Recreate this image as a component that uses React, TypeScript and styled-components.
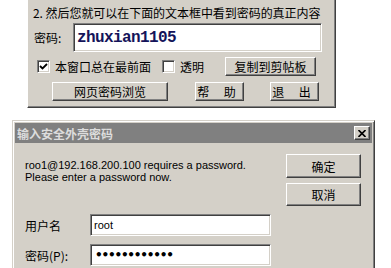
import React from "react";
import styled, { createGlobalStyle } from "styled-components";

const Global = createGlobalStyle`
  html, body { margin: 0; padding: 0; background: #ffffff; }
  body { font-family: "Noto Sans CJK SC", "DejaVu Sans", sans-serif; font-size: 12px; color: #000; }
  * { box-sizing: border-box; }
`;

const Page = styled.div`
  width: 391px;
  height: 268px;
  overflow: hidden;
  display: flex;
  flex-direction: column;
  background: #fff;
`;

const TopWindow = styled.div`
  margin-left: 27px;
  width: 309px;
  height: 108px;
  background: #d4d0c8;
  border-left: 1px solid #ffffff;
  border-right: 1px solid #404040;
  border-bottom: 1px solid #404040;
  box-shadow: inset -1px -1px 0 #808080, inset 1px 0 0 #d4d0c8;
  padding: 5px 13px 0 5px;
  display: flex;
  flex-direction: column;
`;

const Hint = styled.div`
  font-size: 12px;
  line-height: 16px;
  height: 16px;
  white-space: nowrap;
  letter-spacing: -0.05px;
`;

const PwdRow = styled.div`
  display: flex;
  align-items: center;
  margin-top: 2px;
  height: 29px;
`;

const PwdLabel = styled.span`
  width: 40px;
  padding-left: 1px;
  font-size: 12px;
`;

const Sunken = styled.div<{ $w: number; $h: number }>`
  width: ${(p) => p.$w}px;
  height: ${(p) => p.$h}px;
  background: #ffffff;
  border-top: 1px solid #808080;
  border-left: 1px solid #808080;
  border-right: 1px solid #ffffff;
  border-bottom: 1px solid #ffffff;
  box-shadow: inset 1px 1px 0 #404040, inset -1px -1px 0 #d4d0c8;
  display: flex;
  align-items: center;
  padding-left: 3px;
  overflow: hidden;
`;

const BigValue = styled.span`
  font-family: "Liberation Mono", "DejaVu Sans Mono", monospace;
  font-weight: bold;
  font-size: 16px;
  letter-spacing: -0.6px;
  color: #14145a;
`;

const OptRow = styled.div`
  display: flex;
  align-items: center;
  height: 18px;
  margin-top: 5px;
`;

const Check = styled.span`
  width: 13px;
  height: 13px;
  background: #fff;
  border-top: 1px solid #808080;
  border-left: 1px solid #808080;
  border-right: 1px solid #ffffff;
  border-bottom: 1px solid #ffffff;
  box-shadow: inset 1px 1px 0 #404040, inset -1px -1px 0 #d4d0c8;
  display: inline-flex;
  align-items: center;
  justify-content: center;
  flex-shrink: 0;
`;

const CheckLabel = styled.span<{ $w: number }>`
  margin-left: 5px;
  width: ${(p) => p.$w}px;
  font-size: 12px;
  white-space: nowrap;
`;

const Spacer = styled.span<{ $w: number }>`
  width: ${(p) => p.$w}px;
  flex-shrink: 0;
`;

const Button = styled.div<{ $w: number; $h: number; $spacing?: number }>`
  width: ${(p) => p.$w}px;
  height: ${(p) => p.$h}px;
  background: #d4d0c8;
  border-top: 1px solid #ffffff;
  border-left: 1px solid #ffffff;
  border-right: 1px solid #404040;
  border-bottom: 1px solid #404040;
  box-shadow: inset -1px -1px 0 #808080;
  display: flex;
  align-items: center;
  justify-content: center;
  font-size: 12px;
  letter-spacing: ${(p) => p.$spacing ?? 0}px;
  white-space: nowrap;
  flex-shrink: 0;
`;

const BtnRow = styled.div`
  display: flex;
  align-items: center;
  height: 18px;
  margin-top: 7px;
`;

const BottomWindow = styled.div`
  margin-top: 12px;
  margin-left: 12px;
  width: 363px;
  flex: 1;
  background: #d4d0c8;
  border-top: 1px solid #d4d0c8;
  border-left: 1px solid #d4d0c8;
  border-right: 1px solid #404040;
  box-shadow: inset 1px 1px 0 #ffffff, inset -1px 0 0 #808080;
  padding: 2px 2px 0 2px;
  display: flex;
  flex-direction: column;
`;

const TitleBar = styled.div`
  height: 20px;
  background: #808080;
  display: flex;
  align-items: center;
  justify-content: space-between;
  padding: 0 2px 0 2px;
`;

const TitleText = styled.span`
  color: #dcdcdc;
  font-weight: bold;
  font-size: 12px;
`;

const CloseBtn = styled.div`
  width: 16px;
  height: 14px;
  background: #d4d0c8;
  border-top: 1px solid #ffffff;
  border-left: 1px solid #ffffff;
  border-right: 1px solid #404040;
  border-bottom: 1px solid #404040;
  box-shadow: inset -1px -1px 0 #808080;
  display: flex;
  align-items: center;
  justify-content: center;
`;

const DialogBody = styled.div`
  display: flex;
  padding: 11px 11px 0 10px;
`;

const LeftCol = styled.div`
  flex: 1;
  display: flex;
  flex-direction: column;
`;

const Message = styled.div`
  font-family: "Liberation Sans", "DejaVu Sans", sans-serif;
  font-size: 11px;
  line-height: 12px;
  margin-top: 5px;
  white-space: nowrap;
`;

const Form = styled.div`
  display: grid;
  grid-template-columns: 65px 181px;
  row-gap: 8px;
  margin-top: 31px;
  align-items: center;
`;

const FormLabel = styled.span`
  font-size: 12px;
`;

const InputText = styled.span`
  font-family: "Liberation Sans", sans-serif;
  font-size: 11px;
`;

const Dots = styled.span`
  font-family: "DejaVu Sans", sans-serif;
  font-size: 12px;
  font-weight: bold;
  letter-spacing: -1.2px;
  padding-left: 1px;
`;

const RightCol = styled.div`
  display: flex;
  flex-direction: column;
  gap: 5px;
`;

export default function App() {
  return (
    <>
      <Global />
      <Page>
        <TopWindow>
          <Hint>2. 然后您就可以在下面的文本框中看到密码的真正内容</Hint>
          <PwdRow>
            <PwdLabel>密码:</PwdLabel>
            <Sunken $w={249} $h={29}>
              <BigValue>zhuxian1105</BigValue>
            </Sunken>
          </PwdRow>
          <OptRow>
            <Spacer $w={4} />
            <Check>
              <svg width="9" height="9" viewBox="0 0 9 9">
                <path d="M1 4 L3.5 6.5 L8 2" stroke="#000" strokeWidth="1.8" fill="none" />
              </svg>
            </Check>
            <CheckLabel $w={107}>本窗口总在最前面</CheckLabel>
            <Check />
            <CheckLabel $w={45}>透明</CheckLabel>
            <Button $w={91} $h={19}>复制到剪帖板</Button>
          </OptRow>
          <BtnRow>
            <Spacer $w={19} />
            <Button $w={116} $h={19}>网页密码浏览</Button>
            <Spacer $w={27} />
            <Button $w={49} $h={19} $spacing={6}>帮 助</Button>
            <Spacer $w={26} />
            <Button $w={49} $h={19} $spacing={6}>退 出</Button>
          </BtnRow>
        </TopWindow>
        <BottomWindow>
          <TitleBar>
            <TitleText>输入安全外壳密码</TitleText>
            <CloseBtn>
              <svg width="8" height="7" viewBox="0 0 8 7">
                <path d="M0.5 0 L7.5 7 M7.5 0 L0.5 7" stroke="#000" strokeWidth="1.6" />
              </svg>
            </CloseBtn>
          </TitleBar>
          <DialogBody>
            <LeftCol>
              <Message>
                roo1@192.168.200.100 requires a password.
                <br />
                Please enter a password now.
              </Message>
              <Form>
                <FormLabel>用户名</FormLabel>
                <Sunken $w={181} $h={22}>
                  <InputText>root</InputText>
                </Sunken>
                <FormLabel>密码(P):</FormLabel>
                <Sunken $w={181} $h={22}>
                  <Dots>••••••••••••</Dots>
                </Sunken>
              </Form>
            </LeftCol>
            <RightCol>
              <Button $w={75} $h={24}>确定</Button>
              <Button $w={75} $h={23}>取消</Button>
            </RightCol>
          </DialogBody>
        </BottomWindow>
      </Page>
    </>
  );
}
